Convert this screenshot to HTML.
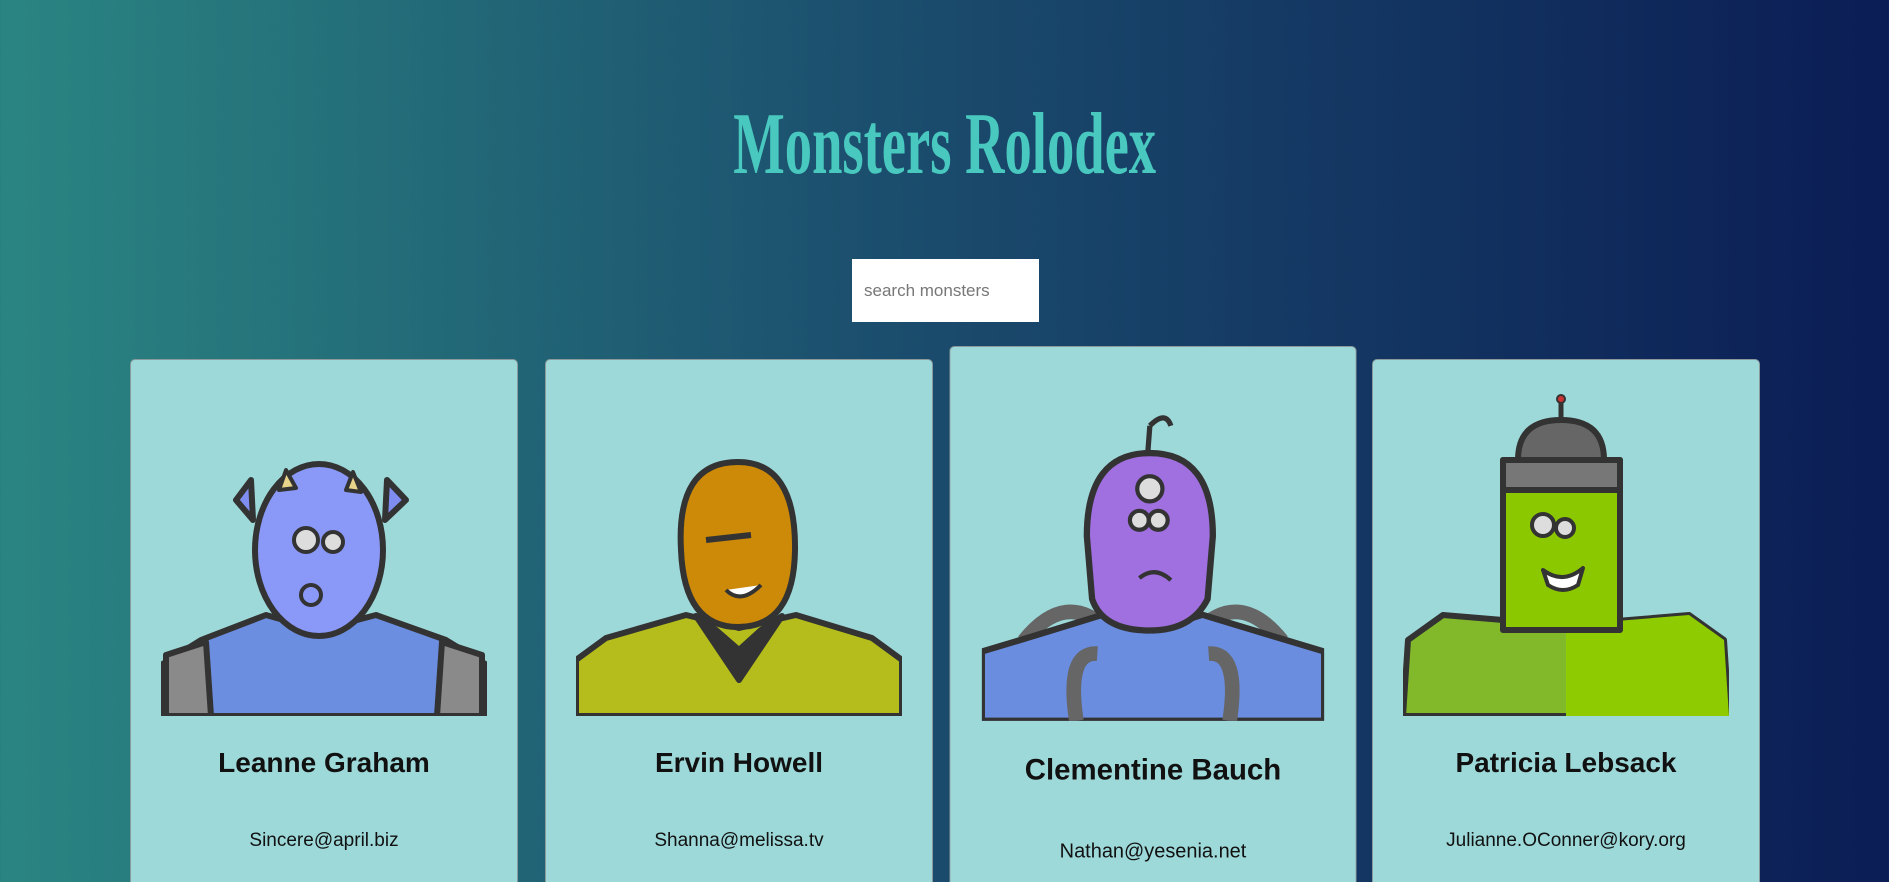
<!DOCTYPE html>
<html><head><meta charset="utf-8"><style>
html,body{margin:0;padding:0;width:1889px;height:882px;overflow:hidden}
body{background:linear-gradient(to left,#0b1d55 0%,#1a4a6c 50%,#2a8582 100%);font-family:"Liberation Sans",sans-serif;position:relative}
h1{position:absolute;left:0;width:1889px;top:94px;margin:0;text-align:center;font-family:"Liberation Serif",serif;font-weight:bold;font-size:88px;color:#48c8bf;letter-spacing:0px;transform:scaleX(0.62);transform-origin:945px 0}
.search{position:absolute;left:852px;top:259px;width:187px;height:63px;background:#fff;box-sizing:border-box;padding-left:12px;line-height:63px;font-size:17px;color:#777}
.card{position:absolute;top:359px;width:386px;height:524px;background:#9ed9da;border:1px solid #8a9a9c;border-bottom:none;border-radius:5px 5px 0 0;text-align:center}
.card svg{position:absolute;left:30px;top:30px;width:326px;height:326px}
.card .n{position:absolute;left:0;right:0;top:387px;font-size:28px;font-weight:bold;color:#111}
.card .e{position:absolute;left:0;right:0;top:470px;font-size:19px;color:#111}
</style></head><body>
<h1>Monsters Rolodex</h1>
<div class="search">search monsters</div>

<div class="card" style="left:130px">
<svg viewBox="0 0 326 326"><g stroke="#333" stroke-width="6" stroke-linejoin="round">
<path d="M0,326 L0,275 L40,250 L105,225 L158,240 L215,225 L285,250 L326,275 L326,326Z" fill="#6c8ee0"/>
<path d="M5,326 L5,265 L45,252 L50,326Z M321,326 L321,265 L281,252 L276,326Z" fill="#8a8a8a"/>
<path d="M90,90 L75,110 L92,130Z M226,90 L245,110 L224,130Z" fill="#7f8df0"/>
<ellipse cx="158" cy="160" rx="64" ry="86" fill="#8a98f8"/>
<path d="M118,100 L125,80 L135,98Z M185,100 L192,82 L200,102Z" fill="#e8d38a" stroke-width="4"/>
<circle cx="145" cy="150" r="12" fill="#ddd" stroke-width="4"/><circle cx="172" cy="152" r="10" fill="#ddd" stroke-width="4"/>
<circle cx="150" cy="205" r="10" fill="#8a98f8" stroke-width="4"/></g></svg>
<div class="n">Leanne Graham</div><div class="e">Sincere@april.biz</div></div>

<div class="card" style="left:545px">
<svg viewBox="0 0 326 326"><g stroke="#333" stroke-width="6" stroke-linejoin="round">
<path d="M0,326 L0,270 L30,248 L110,225 L163,238 L220,225 L296,248 L326,270 L326,326Z" fill="#b4bd1c"/>
<path d="M120,226 L163,290 L206,226 L185,240 L163,260 L140,240Z" fill="#333"/>
<path d="M105,160 Q100,72 162,72 Q220,72 219,160 Q218,237 162,237 Q108,237 105,160Z" fill="#cc8a08"/>
<path d="M130,150 L175,145" fill="none"/><path d="M150,200 Q165,215 185,195" fill="#fff" stroke-width="4"/></g></svg>
<div class="n">Ervin Howell</div><div class="e">Shanna@melissa.tv</div></div>

<div class="card" style="left:959px;height:520px;transform:scale(1.05);transform-origin:center center">
<svg viewBox="0 0 326 326"><g stroke="#333" stroke-width="6" stroke-linejoin="round">
<path d="M40,250 Q80,200 120,240 M206,240 Q246,200 286,250" fill="none" stroke="#666" stroke-width="14"/>
<path d="M0,326 L0,260 L50,245 L115,225 L163,240 L210,225 L276,245 L326,260 L326,326Z" fill="#6a8de0"/>
<path d="M90,326 Q80,260 110,262 M236,326 Q246,260 216,262" fill="none" stroke="#666" stroke-width="14"/>
<path d="M100,150 Q100,71 160,71 Q220,71 220,150 L215,210 Q200,240 160,240 Q115,240 105,210Z" fill="#a06fe0"/>
<circle cx="160" cy="105" r="12" fill="#ddd" stroke-width="4"/><circle cx="150" cy="135" r="9" fill="#ddd" stroke-width="4"/><circle cx="168" cy="135" r="9" fill="#ddd" stroke-width="4"/>
<path d="M150,190 Q165,178 180,192" fill="none" stroke-width="4"/><path d="M158,71 L160,45 M160,45 Q175,30 180,45" fill="none" stroke-width="5"/></g></svg>
<div class="n">Clementine Bauch</div><div class="e">Nathan@yesenia.net</div></div>

<div class="card" style="left:1372px">
<svg viewBox="0 0 326 326"><g stroke="#333" stroke-width="6" stroke-linejoin="round">
<path d="M0,326 L5,250 L40,225 L100,230 L163,235 L226,230 L286,225 L321,250 L326,326Z" fill="#82b92a"/>
<path d="M163,235 L226,230 L286,225 L321,250 L326,326 L163,326Z" fill="#8ecb00" stroke="none"/>
<rect x="100" y="70" width="117" height="170" fill="#8cc800"/>
<path d="M115,70 Q115,30 158,30 Q201,30 201,70Z" fill="#666"/>
<rect x="100" y="70" width="117" height="30" fill="#777"/>
<path d="M158,30 L158,10" stroke-width="5"/><circle cx="158" cy="9" r="4" fill="#c33" stroke-width="2"/>
<circle cx="140" cy="135" r="11" fill="#ddd" stroke-width="4"/><circle cx="162" cy="138" r="9" fill="#ddd" stroke-width="4"/>
<path d="M140,180 Q160,195 180,178 L175,195 Q160,205 145,195Z" fill="#fff" stroke-width="4"/></g></svg>
<div class="n">Patricia Lebsack</div><div class="e">Julianne.OConner@kory.org</div></div>
</body></html>
